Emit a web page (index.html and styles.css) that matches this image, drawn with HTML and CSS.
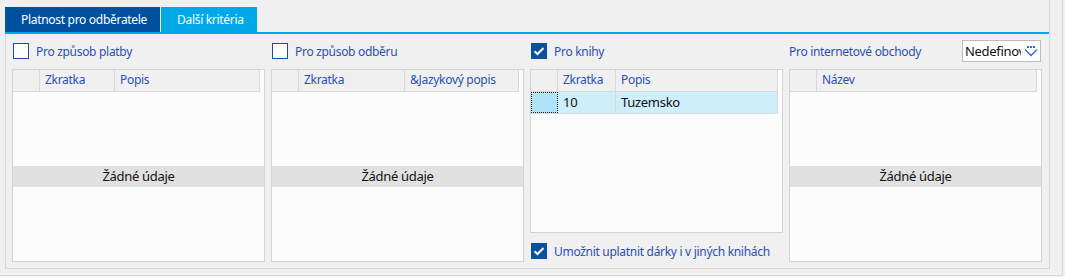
FILE: index.html
```html
<!DOCTYPE html>
<html lang="cs">
<head>
<meta charset="UTF-8">
<meta name="viewport" content="width=device-width, initial-scale=1.0">
<title>Další kritéria</title>
<link rel="stylesheet" href="styles.css">
</head>
<body>

<div class="frame">
  <div class="tabcontrol">
    <div class="tabs">
      <div class="tab">Platnost pro odběratele</div>
      <div class="tab active">Další kritéria</div>
    </div>

    <div class="panel">

      <div class="column">
        <div class="head-row">
          <span class="checkbox"></span>
          <span class="label">Pro způsob platby</span>
        </div>
        <div class="grid">
          <div class="grid-header">
            <div class="cell ind"></div>
            <div class="cell w75">Zkratka</div>
            <div class="cell fill">Popis</div>
          </div>
          <div class="grid-body">
            <div class="empty">Žádné údaje</div>
          </div>
        </div>
      </div>

      <div class="column">
        <div class="head-row">
          <span class="checkbox"></span>
          <span class="label">Pro způsob odběru</span>
        </div>
        <div class="grid">
          <div class="grid-header">
            <div class="cell ind"></div>
            <div class="cell w106">Zkratka</div>
            <div class="cell fill">&amp;Jazykový popis</div>
          </div>
          <div class="grid-body">
            <div class="empty">Žádné údaje</div>
          </div>
        </div>
      </div>

      <div class="column">
        <div class="head-row">
          <span class="checkbox checked">
            <svg width="12" height="10" viewBox="0 0 12 10"><polyline points="1.5,5.2 4.5,8 10.5,2" fill="none" stroke="#fff" stroke-width="2"/></svg>
          </span>
          <span class="label">Pro knihy</span>
        </div>
        <div class="grid short">
          <div class="grid-header">
            <div class="cell ind"></div>
            <div class="cell w58">Zkratka</div>
            <div class="cell fill">Popis</div>
          </div>
          <div class="grid-row">
            <div class="cell ind focus"></div>
            <div class="cell w58">10</div>
            <div class="cell fill">Tuzemsko</div>
          </div>
        </div>
        <div class="foot-row">
          <span class="checkbox checked">
            <svg width="12" height="10" viewBox="0 0 12 10"><polyline points="1.5,5.2 4.5,8 10.5,2" fill="none" stroke="#fff" stroke-width="2"/></svg>
          </span>
          <span class="label">Umožnit uplatnit dárky i v jiných knihách</span>
        </div>
      </div>

      <div class="column">
        <div class="head-row">
          <span class="label plain">Pro internetové obchody</span>
          <div class="combo">
            <span class="combo-text">Nedefinováno</span>
            <svg class="combo-icon" width="14" height="11" viewBox="0 0 14 11">
              <rect x="3" y="0" width="2" height="2" fill="#2a6fc4"/>
              <rect x="6" y="0" width="2" height="2" fill="#2a6fc4"/>
              <rect x="9" y="0" width="2" height="2" fill="#2a6fc4"/>
              <polyline points="1,3.5 7,9.5 13,3.5" fill="none" stroke="#2a6fc4" stroke-width="1.3"/>
            </svg>
          </div>
        </div>
        <div class="grid">
          <div class="grid-header">
            <div class="cell ind"></div>
            <div class="cell fill">Název</div>
          </div>
          <div class="grid-body">
            <div class="empty">Žádné údaje</div>
          </div>
        </div>
      </div>

    </div>
  </div>
</div>

</body>
</html>
```

FILE: styles.css
```css
body {
  margin: 0;
  background-color: #f0f0f0;
  font-family: "Noto Sans", "Open Sans", sans-serif;
  font-size: 12px;
  letter-spacing: -0.3px;
}
.frame {
  width: 1062px;
  height: 275px;
  border-right: 1px solid #d7d7d7;
  border-bottom: 1px solid #d7d7d7;
}
.tabcontrol {
  margin-left: 5px;
  width: 1044px;
  padding-top: 7px;
  border-right: 1px solid #d7d7d7;
}
.tabs {
  display: flex;
  gap: 1px;
  height: 25px;
  border-bottom: 2px solid #00a8e8;
}
.tab {
  background-color: #0050a0;
  color: white;
  padding-left: 16px;
  width: 155px;
  box-sizing: border-box;
  line-height: 25px;
  white-space: nowrap;
}
.tab.active {
  background-color: #00a8e8;
  width: 96px;
}
.panel {
  display: grid;
  grid-template-columns: repeat(4, 253px);
  column-gap: 6px;
  padding: 6px 5px 6px 6px;
  border-left: 1px solid #d7d7d7;
  border-bottom: 1px solid #d7d7d7;
  height: 222px;
}
.column {
  display: flex;
  flex-direction: column;
}
.head-row, .foot-row {
  display: flex;
  align-items: center;
  height: 22px;
  flex-shrink: 0;
}
.head-row {
  margin-bottom: 7px;
}
.foot-row {
  margin-top: 7px;
}
.checkbox {
  width: 14px;
  height: 14px;
  border: 1px solid #1c4f9c;
  background-color: white;
  margin-left: 1px;
  margin-right: 7px;
  display: flex;
  align-items: center;
  justify-content: center;
}
.checkbox.checked {
  background-color: #0a50a0;
  border-color: #0a50a0;
}
.label {
  color: #2b4fb5;
  white-space: nowrap;
}
.label.plain {
  flex: 1;
}
.combo {
  width: 77px;
  height: 20px;
  border: 1px solid #bcbcbc;
  background-color: white;
  display: flex;
  align-items: center;
  overflow: hidden;
  margin-right: 1px;
}
.combo-text {
  font-size: 13px;
  color: #111;
  padding-left: 2px;
  width: 56px;
  overflow: hidden;
  white-space: nowrap;
}
.combo-icon {
  margin-left: 3px;
}
.grid {
  flex: 1;
  border: 1px solid #d3d3d3;
  background-color: #fcfcfc;
  display: flex;
  flex-direction: column;
}
.grid-header, .grid-row {
  display: flex;
  height: 21px;
  margin-right: 4px;
  border-bottom: 1px solid #d8d8d8;
  border-right: 1px solid #d8d8d8;
  flex-shrink: 0;
}
.grid-header {
  background-color: #f0f0f0;
  color: #2b4fb5;
}
.grid-row {
  background-color: #cdeefa;
  color: #111;
  font-size: 13px;
}
.cell {
  line-height: 20px;
  padding-left: 5px;
  border-right: 1px solid #d8d8d8;
  white-space: nowrap;
  box-sizing: border-box;
}
.cell.fill {
  flex: 1;
  border-right: none;
}
.cell.ind {
  width: 27px;
  padding: 0;
}
.cell.focus {
  background-color: #b0e2f8;
  border: 1px dotted #222;
}
.w75 { width: 75px; }
.w106 { width: 106px; }
.w58 { width: 58px; }
.grid-body {
  flex: 1;
  display: flex;
  align-items: center;
}
.empty {
  flex: 1;
  background-color: #e1e1e1;
  text-align: center;
  color: #111;
  font-size: 13px;
  line-height: 21px;
}
```
